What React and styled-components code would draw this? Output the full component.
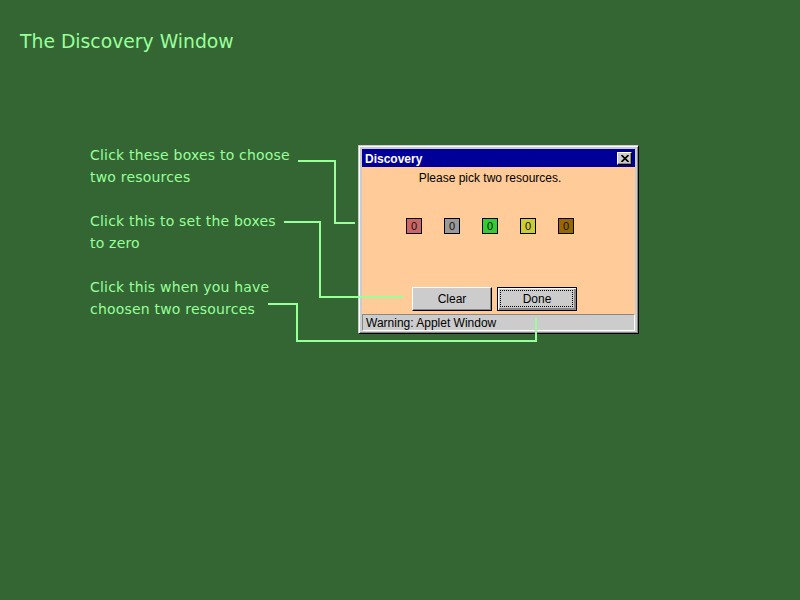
import React from "react";
import styled, { createGlobalStyle } from "styled-components";

const GlobalStyle = createGlobalStyle`
  html, body {
    margin: 0;
    padding: 0;
    background: #336633;
  }
`;

const Page = styled.div`
  position: relative;
  width: 800px;
  height: 600px;
  background: #336633;
  overflow: hidden;
`;

const Heading = styled.h1`
  margin: 0;
  padding: 29px 0 0 20px;
  font-family: "DejaVu Sans", sans-serif;
  font-weight: normal;
  font-size: 18.8px;
  line-height: 26px;
  color: #99ff99;
`;

const Main = styled.div`
  display: flex;
  align-items: flex-start;
  margin-top: 89px;
  padding-left: 90px;
`;

const Notes = styled.div`
  width: 268px;
  display: flex;
  flex-direction: column;
  gap: 22px;
`;

const Note = styled.p`
  margin: 0;
  font-family: "DejaVu Sans", sans-serif;
  font-size: 14px;
  line-height: 22px;
  letter-spacing: 0.2px;
  color: #99ff99;
`;

const Frame = styled.div`
  box-sizing: border-box;
  width: 281px;
  height: 189px;
  margin-top: 1px;
  padding: 3px 3px 2px;
  background: #cccccc;
  border: 1px solid;
  border-color: #cccccc #000000 #000000 #cccccc;
  box-shadow: inset 1px 1px #ffffff, inset -1px -1px #888888;
  display: flex;
  flex-direction: column;
`;

const TitleBar = styled.div`
  height: 18px;
  flex-shrink: 0;
  display: flex;
  align-items: center;
  justify-content: space-between;
  padding: 0 3px;
  background: #000099;
`;

const TitleText = styled.span`
  font-family: "Liberation Sans", Arial, sans-serif;
  font-weight: bold;
  font-size: 12px;
  color: #ffffff;
  padding-top: 1px;
`;

const CloseButton = styled.div`
  box-sizing: border-box;
  width: 15px;
  height: 13px;
  background: #cccccc;
  border: 1px solid;
  border-color: #ffffff #000000 #000000 #ffffff;
  box-shadow: inset -1px -1px #888888;
  display: flex;
  align-items: center;
  justify-content: center;
`;

const Content = styled.div`
  height: 147px;
  flex-shrink: 0;
  box-sizing: border-box;
  padding: 4px 17px 0 0;
  background: #ffcc99;
  display: flex;
  flex-direction: column;
  align-items: center;
`;

const Prompt = styled.div`
  font-family: "Liberation Sans", Arial, sans-serif;
  font-size: 12px;
  line-height: 14px;
  color: #000000;
`;

const Boxes = styled.div`
  display: flex;
  gap: 22px;
  margin-top: 33px;
`;

const ResourceBox = styled.div`
  box-sizing: border-box;
  width: 16px;
  height: 16px;
  border: 1px solid #000000;
  background: ${({ $color }) => $color};
  font-family: "Liberation Sans", Arial, sans-serif;
  font-size: 11px;
  line-height: 14px;
  text-align: center;
  color: #111111;
`;

const Buttons = styled.div`
  display: flex;
  gap: 5px;
  margin-top: 53px;
  margin-left: 9px;
`;

const Button = styled.div`
  position: relative;
  box-sizing: border-box;
  width: 80px;
  height: 24px;
  background: #cccccc;
  border: 1px solid;
  border-color: ${({ $default }) =>
    $default ? "#000000" : "#ffffff #000000 #000000 #ffffff"};
  box-shadow: ${({ $default }) =>
    $default
      ? "inset 1px 1px #ffffff, inset -2px -2px #888888"
      : "inset -1px -1px #888888"};
  font-family: "Liberation Sans", Arial, sans-serif;
  font-size: 12px;
  line-height: 22px;
  text-align: center;
  color: #000000;
`;

const FocusRing = styled.span`
  position: absolute;
  top: 2px;
  left: 2px;
  right: 3px;
  bottom: 3px;
  border: 1px dotted #000000;
`;

const StatusBar = styled.div`
  box-sizing: border-box;
  height: 17px;
  flex-shrink: 0;
  padding-left: 3px;
  background: #cccccc;
  border: 1px solid;
  border-color: #888888 #ffffff #ffffff #888888;
  font-family: "Liberation Sans", Arial, sans-serif;
  font-size: 12px;
  line-height: 16px;
  color: #000000;
`;

const Connectors = styled.svg`
  position: absolute;
  top: 0;
  left: 0;
  pointer-events: none;
`;

const resourceColors = ["#cc6666", "#999999", "#33cc33", "#cccc33", "#996600"];

const notes = [
  ["Click these boxes to choose", "two resources"],
  ["Click this to set the boxes", "to zero"],
  ["Click this when you have", "choosen two resources"],
];

const lines = [
  "M298 161 H335 V223 H355",
  "M284 222 H320 V297 H403",
  "M268 304 H297 V341 H536 V318",
];

const App = () => (
  <Page>
    <GlobalStyle />
    <Heading>The Discovery Window</Heading>
    <Main>
      <Notes>
        {notes.map(([a, b]) => (
          <Note key={a}>
            {a}
            <br />
            {b}
          </Note>
        ))}
      </Notes>
      <Frame>
        <TitleBar>
          <TitleText>Discovery</TitleText>
          <CloseButton>
            <svg width="8" height="7" viewBox="0 0 8 7">
              <path d="M0.5 0 L7.5 7 M7.5 0 L0.5 7" stroke="#000" strokeWidth="1.6" />
            </svg>
          </CloseButton>
        </TitleBar>
        <Content>
          <Prompt>Please pick two resources.</Prompt>
          <Boxes>
            {resourceColors.map((c) => (
              <ResourceBox key={c} $color={c}>
                0
              </ResourceBox>
            ))}
          </Boxes>
          <Buttons>
            <Button>Clear</Button>
            <Button $default>
              <FocusRing />
              Done
            </Button>
          </Buttons>
        </Content>
        <StatusBar>Warning: Applet Window</StatusBar>
      </Frame>
    </Main>
    <Connectors width="800" height="600">
      {lines.map((d) => (
        <path key={d} d={d} fill="none" stroke="#99ff99" strokeWidth="2" />
      ))}
    </Connectors>
  </Page>
);

export default App;
